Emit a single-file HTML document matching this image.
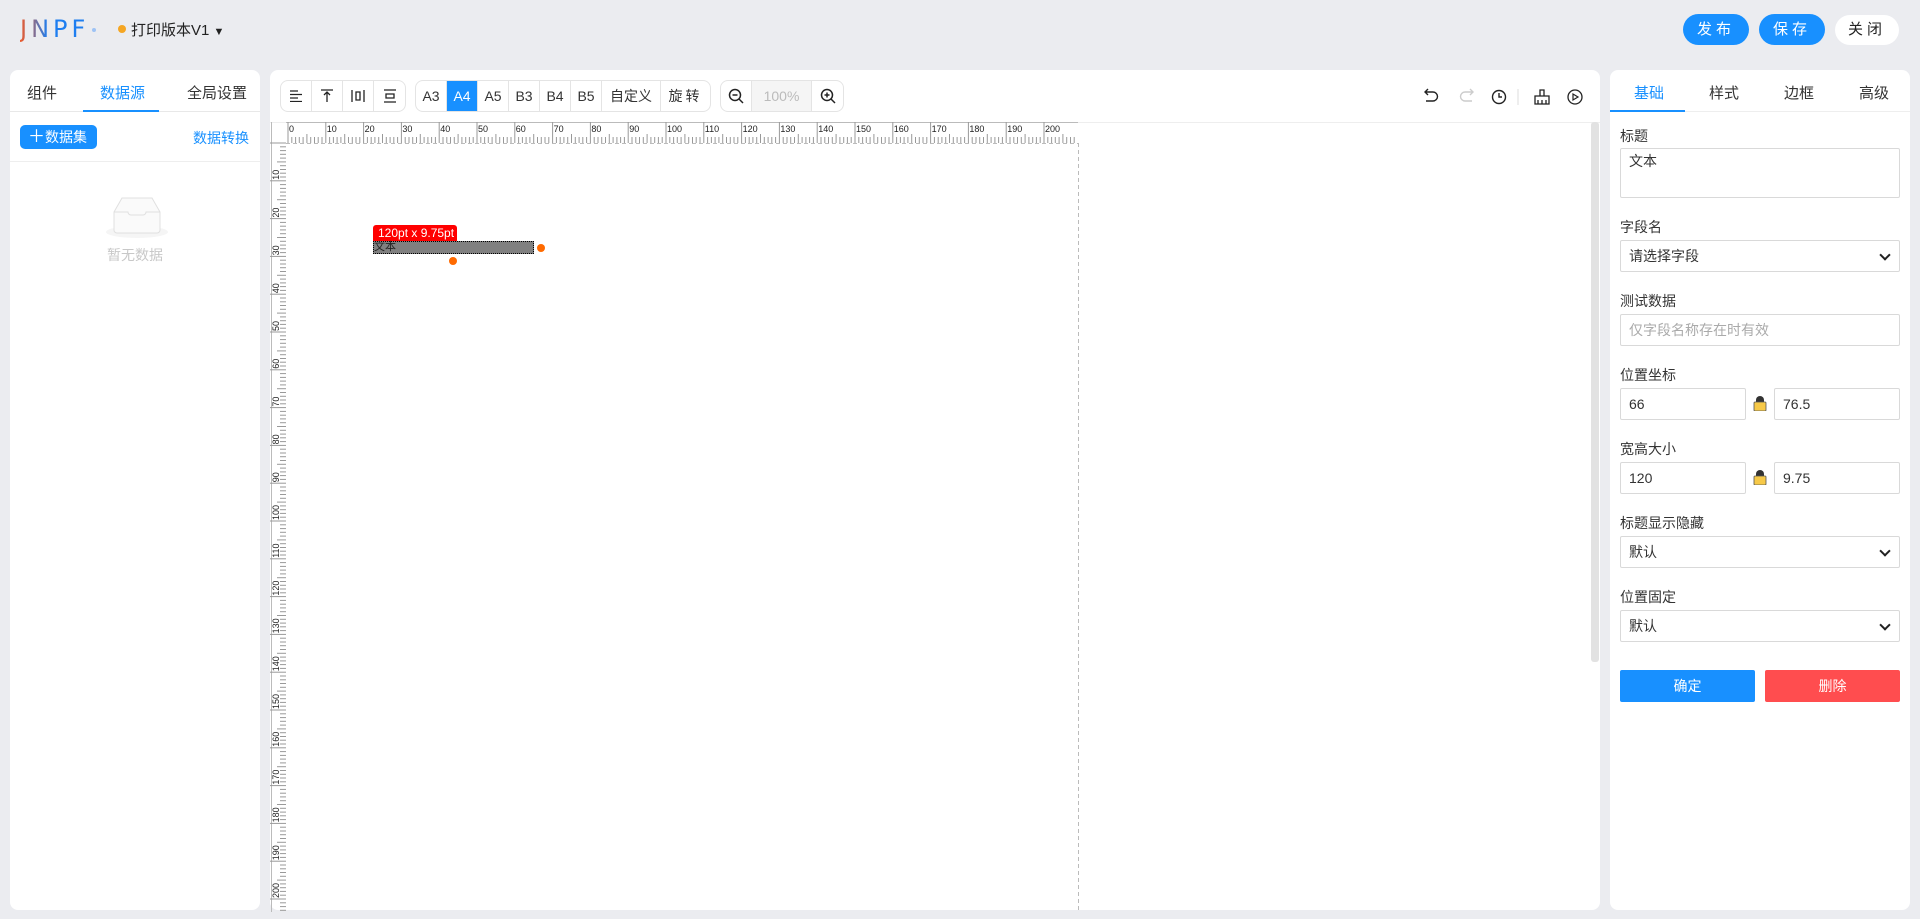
<!DOCTYPE html>
<html><head><meta charset="utf-8"><style>
*{box-sizing:border-box;margin:0;padding:0}
body{width:1920px;height:919px;background:#ebecf0;font-family:"Liberation Sans","Noto Sans CJK SC",sans-serif;font-size:14px;color:#333;position:relative;overflow:hidden}
.abs{position:absolute}
.panel{position:absolute;background:#fff;border-radius:8px}
.btn{position:absolute;border-radius:16px;color:#fff;background:#1890ff;font-size:15px;text-align:center;line-height:31px;letter-spacing:4px}
.grp{position:absolute;top:80px;height:32px;border:1px solid #e4e4e4;border-radius:8px;display:flex;overflow:hidden;background:#fff}
.grp div{height:30px;border-right:1px solid #e4e4e4;display:flex;align-items:center;justify-content:center;font-size:14px;color:#333}
.grp div:last-child{border-right:none}
.lbl{position:absolute;left:1620px;font-size:14px;color:#333}
.inp{position:absolute;border:1px solid #d9d9d9;border-radius:2px;height:32px;line-height:30px;padding-left:8px;font-size:14px;color:#333;background:#fff}
.sel:after{content:"";position:absolute;right:10px;top:10px;width:6px;height:6px;border-right:2px solid #222;border-bottom:2px solid #222;transform:rotate(45deg)}
</style></head><body>
<!-- header -->
<div class="abs" style="left:20px;top:15px;font-size:24px;letter-spacing:4px;background:linear-gradient(90deg,#f05a28,#1e7ef0 40%);-webkit-background-clip:text;color:transparent;font-family:'DejaVu Sans',sans-serif">JNPF</div>
<div class="abs" style="left:92px;top:28px;width:4px;height:4px;border-radius:50%;background:#9ec3f5"></div>
<div class="abs" style="left:118px;top:25px;width:8px;height:8px;border-radius:50%;background:#f5a623"></div>
<div class="abs" style="left:131px;top:19px;font-size:15px;color:#222">打印版本V1 <span style="font-size:11px">▼</span></div>
<div class="btn" style="left:1683px;top:14px;width:66px">发布</div>
<div class="btn" style="left:1759px;top:14px;width:66px">保存</div>
<div class="btn" style="left:1835px;top:15px;width:64px;background:#fff;color:#222;line-height:30px">关闭</div>

<!-- left panel -->
<div class="panel" style="left:10px;top:70px;width:250px;height:840px">
  <div class="abs" style="left:0;top:41px;width:250px;height:1px;background:#e8e8e8"></div>
  <div class="abs" style="left:17px;top:12px;font-size:15px">组件</div>
  <div class="abs" style="left:90px;top:12px;font-size:15px;color:#1890ff">数据源</div>
  <div class="abs" style="left:177px;top:12px;font-size:15px">全局设置</div>
  <div class="abs" style="left:73px;top:40px;width:76px;height:2px;background:#1890ff"></div>
  <div class="abs" style="left:10px;top:55px;width:77px;height:24px;border-radius:5px;background:#1890ff;color:#fff;font-size:14px;line-height:24px;padding-left:8px"><span style="font-size:17px">＋</span>数据集</div>
  <div class="abs" style="left:183px;top:58px;color:#1890ff;font-size:14px">数据转换</div>
  <div class="abs" style="left:0;top:91px;width:250px;height:1px;background:#eee"></div>
  <svg class="abs" style="left:92px;top:122px" width="70" height="50" viewBox="0 0 70 50"><ellipse cx="35" cy="40" rx="31" ry="6" fill="#f5f5f5"/><path d="M20 6h30l8 14v18a3 3 0 0 1-3 3H15a3 3 0 0 1-3-3V20z" fill="#fafafa" stroke="#e0e0e0"/><path d="M12 20h14a3 3 0 0 0 3 3h12a3 3 0 0 0 3-3h14" fill="none" stroke="#e0e0e0"/></svg>
  <div class="abs" style="left:97px;top:175px;color:#c8c8c8;font-size:14px">暂无数据</div>
</div>

<!-- center panel -->
<div class="panel" style="left:270px;top:70px;width:1330px;height:840px;overflow:hidden">
  <div class="abs" style="left:0;top:52px;width:1330px;height:1px;background:#eee"></div>
</div>
<div class="grp" style="left:280px">
  <div style="width:31px"><svg width="14" height="12"><path d="M1 1h8M1 4.5h12M1 8h8M1 11.5h12" stroke="#222" stroke-width="1.3"/></svg></div>
  <div style="width:31px"><svg width="14" height="14"><path d="M1 1h12M7 13V4M4 6l3-3 3 3" stroke="#222" stroke-width="1.3" fill="none"/></svg></div>
  <div style="width:31px"><svg width="14" height="14"><path d="M1 1v12M13 1v12M5 3h4v8H5z" stroke="#222" stroke-width="1.3" fill="none"/></svg></div>
  <div style="width:31px"><svg width="14" height="14"><path d="M1 1h12M1 13h12M3 5h8v4H3z" stroke="#222" stroke-width="1.3" fill="none"/></svg></div>
</div>
<div class="grp" style="left:415px">
  <div style="width:31px">A3</div><div style="width:31px;background:#1890ff;color:#fff">A4</div><div style="width:31px">A5</div><div style="width:31px">B3</div><div style="width:31px">B4</div><div style="width:31px">B5</div><div style="width:59px">自定义</div><div style="width:49px;letter-spacing:3px">旋转</div>
</div>
<div class="grp" style="left:720px">
  <div style="width:31px"><svg width="16" height="16"><circle cx="7" cy="7" r="5.5" stroke="#222" stroke-width="1.5" fill="none"/><path d="M4.5 7h5M11 11l4 4" stroke="#222" stroke-width="1.5"/></svg></div>
  <div style="width:60px;background:#f5f5f5;color:#bbb">100%</div>
  <div style="width:31px"><svg width="16" height="16"><circle cx="7" cy="7" r="5.5" stroke="#222" stroke-width="1.5" fill="none"/><path d="M4.5 7h5M7 4.5v5M11 11l4 4" stroke="#222" stroke-width="1.5"/></svg></div>
</div>
<svg class="abs" style="left:1422px;top:88px" width="170" height="18" viewBox="0 0 170 18">
  <path d="M3 4h8a4.5 4.5 0 0 1 0 9H4M6 1L3 4l3 3" stroke="#222" stroke-width="1.4" fill="none"/>
  <path d="M51 4h-8a4.5 4.5 0 0 0 0 9h7M48 1l3 3-3 3" stroke="#ccc" stroke-width="1.4" fill="none"/>
  <circle cx="77" cy="9" r="6.5" stroke="#222" stroke-width="1.4" fill="none"/><path d="M77 5v4h3" stroke="#222" stroke-width="1.4" fill="none"/>
  <path d="M96 1v16" stroke="#ddd"/>
  <path d="M113 8h14v8h-14zM118 8V2h4v6M116 12v4M120 12v4M124 12v4" stroke="#222" stroke-width="1.3" fill="none"/>
  <circle cx="153" cy="9" r="7" stroke="#222" stroke-width="1.3" fill="none"/><path d="M151 6v6l5-3z" stroke="#222" stroke-width="1.2" fill="none"/>
</svg>
<!-- ruler & paper -->
<svg class="abs" style="left:270px;top:122px" width="830" height="790" id="rul"></svg>
<div class="abs" style="left:1591px;top:122px;width:8px;height:540px;background:#e2e2e2;border-radius:3px"></div>
<!-- element -->
<div class="abs" style="left:373px;top:225px;width:84px;height:16px;background:#f00;color:#fff;font-size:12px;line-height:16px;padding-left:5px;border-radius:3px 3px 0 0">120pt x 9.75pt</div>
<div class="abs" style="left:373px;top:241px;width:161px;height:13px;background:#808080;border:1px dotted #000;font-size:11px;line-height:11px;color:#222">文本</div>
<div class="abs" style="left:537px;top:244px;width:8px;height:8px;border-radius:50%;background:#ff6a00"></div>
<div class="abs" style="left:449px;top:257px;width:8px;height:8px;border-radius:50%;background:#ff6a00"></div>

<!-- right panel -->
<div class="panel" style="left:1610px;top:70px;width:300px;height:840px">
  <div class="abs" style="left:0;top:41px;width:300px;height:1px;background:#eee"></div>
  <div class="abs" style="left:0;top:40px;width:75px;height:2px;background:#1890ff"></div>
  <div class="abs" style="left:24px;top:12px;font-size:15px;color:#1890ff">基础</div>
  <div class="abs" style="left:99px;top:12px;font-size:15px">样式</div>
  <div class="abs" style="left:174px;top:12px;font-size:15px">边框</div>
  <div class="abs" style="left:249px;top:12px;font-size:15px">高级</div>
</div>
<div class="lbl" style="top:126px">标题</div>
<div class="inp" style="left:1620px;top:148px;width:280px;height:50px;line-height:20px;padding-top:2px">文本</div>
<div class="lbl" style="top:217px">字段名</div>
<div class="inp sel" style="left:1620px;top:240px;width:280px">请选择字段</div>
<div class="lbl" style="top:291px">测试数据</div>
<div class="inp" style="left:1620px;top:314px;width:280px;color:#aaa">仅字段名称存在时有效</div>
<div class="lbl" style="top:365px">位置坐标</div>
<div class="inp" style="left:1620px;top:388px;width:126px">66</div>
<div class="inp" style="left:1774px;top:388px;width:126px">76.5</div>
<div class="lbl" style="top:439px">宽高大小</div>
<div class="inp" style="left:1620px;top:462px;width:126px">120</div>
<div class="inp" style="left:1774px;top:462px;width:126px">9.75</div>
<svg class="abs" style="left:1753px;top:395px" width="14" height="16"><path d="M3 7V5a4 4 0 0 1 8 0v2" fill="#333"/><rect x="1" y="7" width="12" height="9" rx="1" fill="#f7c948" stroke="#555" stroke-width=".8"/></svg>
<svg class="abs" style="left:1753px;top:469px" width="14" height="16"><path d="M3 7V5a4 4 0 0 1 8 0v2" fill="#333"/><rect x="1" y="7" width="12" height="9" rx="1" fill="#f7c948" stroke="#555" stroke-width=".8"/></svg>
<div class="lbl" style="top:513px">标题显示隐藏</div>
<div class="inp sel" style="left:1620px;top:536px;width:280px">默认</div>
<div class="lbl" style="top:587px">位置固定</div>
<div class="inp sel" style="left:1620px;top:610px;width:280px">默认</div>
<div class="abs" style="left:1620px;top:670px;width:135px;height:32px;background:#1890ff;color:#fff;text-align:center;line-height:32px;border-radius:2px">确定</div>
<div class="abs" style="left:1765px;top:670px;width:135px;height:32px;background:#ff4d4f;color:#fff;text-align:center;line-height:32px;border-radius:2px">删除</div>

<script>
(function(){
var s='',u=3.78,x0=18,y0=21;
s+='<rect x="16" y="0" width="792" height="21" fill="#fff"/>';
s+='<line x1="16" y1="0.5" x2="808" y2="0.5" stroke="#bbb"/>';
for(var i=0;i<=208;i++){var x=x0+i*u;var h=i%10==0?21:(i%5==0?9:6);s+='<line x1="'+x.toFixed(1)+'" y1="'+(y0-h)+'" x2="'+x.toFixed(1)+'" y2="'+y0+'" stroke="#999" stroke-width="1"/>';if(i%10==0)s+='<text x="'+(x+1).toFixed(1)+'" y="10" font-size="9" fill="#222" font-family="Liberation Sans">'+i+'</text>';}
s+='<line x1="1.5" y1="0" x2="1.5" y2="790" stroke="#bbb"/>';
for(var j=0;j<=210;j++){var y=y0+j*u;var w=j%10==0?16:(j%5==0?9:6);s+='<line x1="'+(16-w)+'" y1="'+y.toFixed(1)+'" x2="16" y2="'+y.toFixed(1)+'" stroke="#999"/>';if(j%10==0&&j>0)s+='<text transform="translate(9,'+(y-1).toFixed(1)+') rotate(-90)" font-size="9" fill="#222" font-family="Liberation Sans">'+j+'</text>';}
s+='<line x1="808.5" y1="21" x2="808.5" y2="790" stroke="#bbb" stroke-dasharray="4,3"/>';
s+='<line x1="16" y1="21.5" x2="808" y2="21.5" stroke="#bbb" stroke-dasharray="4,3"/>';
document.getElementById('rul').innerHTML=s;
})();
</script>
</body></html>
